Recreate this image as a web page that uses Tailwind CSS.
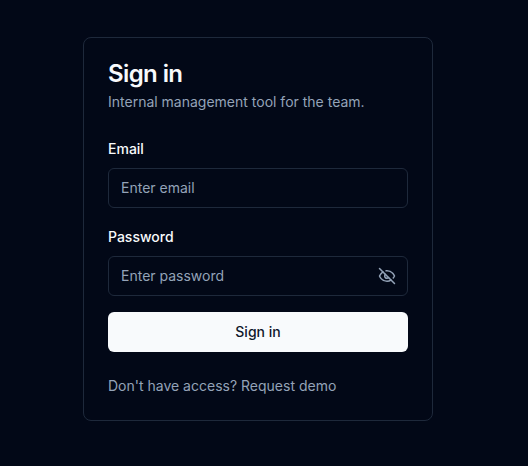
<!DOCTYPE html>
<html lang="en">

<head>
    <meta charset="UTF-8" />
    <meta name="viewport" content="width=device-width, initial-scale=1.0" />
    <title>Sign in</title>
    <script src="https://cdn.jsdelivr.net/npm/@tailwindcss/browser@4"></script>
</head>

<body class="bg-[#020817] text-[#f8fafc] font-[Inter,sans-serif] h-[466px] overflow-hidden">

    <div class="w-[516px] pt-[37px] flex justify-center">
        <!-- Card -->
        <div class="w-[350px] h-[384px] rounded-lg border border-[#1e293b] p-6">
            <h1 class="text-2xl leading-6 font-semibold tracking-tight">Sign in</h1>
            <p class="mt-1.5 text-sm leading-5 text-[#94a3b8]">Internal management tool for the team.</p>

            <form class="mt-[27px]">
                <label class="block text-sm leading-5 font-medium">Email</label>
                <input type="text" placeholder="Enter email"
                    class="mt-[9px] block w-full h-10 rounded-md border border-[#1e293b] bg-transparent px-3 pb-[2px] text-sm placeholder:text-[#94a3b8]" />

                <label class="block text-sm leading-5 font-medium mt-[19px]">Password</label>
                <div class="relative mt-[9px]">
                    <input type="password" placeholder="Enter password"
                        class="block w-full h-10 rounded-md border border-[#1e293b] bg-transparent px-3 pr-10 pb-[2px] text-sm placeholder:text-[#94a3b8]" />
                    <svg xmlns="http://www.w3.org/2000/svg" class="absolute right-3 top-[11px] size-[18px] text-[#94a3b8]"
                        fill="none" viewBox="0 0 24 24" stroke="currentColor" stroke-width="2" stroke-linecap="round"
                        stroke-linejoin="round">
                        <path d="M9.88 9.88a3 3 0 1 0 4.24 4.24" />
                        <path d="M10.73 5.08A10.43 10.43 0 0 1 12 5c7 0 10 7 10 7a13.16 13.16 0 0 1-1.67 2.68" />
                        <path d="M6.61 6.61A13.526 13.526 0 0 0 2 12s3 7 10 7a9.74 9.74 0 0 0 5.39-1.61" />
                        <line x1="2" x2="22" y1="2" y2="22" />
                    </svg>
                </div>

                <button type="button"
                    class="mt-4 w-full h-10 rounded-md bg-[#f8fafc] text-[#0f172a] text-sm font-medium">Sign in</button>
            </form>

            <p class="mt-6 text-sm leading-5 text-[#94a3b8]">Don't have access? Request demo</p>
        </div>
    </div>

</body>

</html>
